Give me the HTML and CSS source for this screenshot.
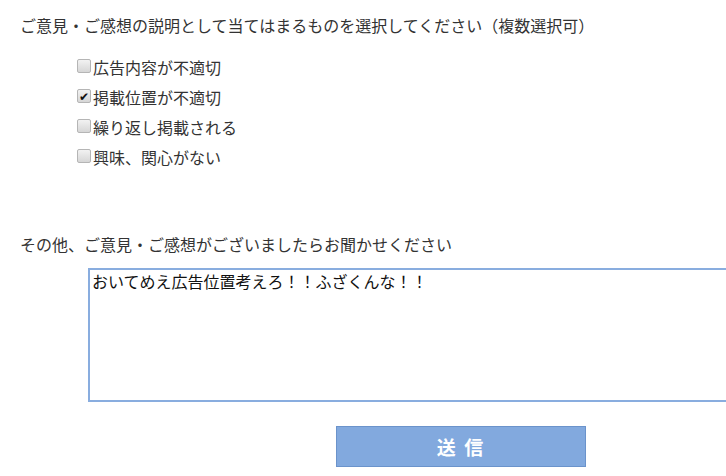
FILE: index.html
```html
<html>

<head>
    <title>ご意見・ご感想</title>
    <meta charset="utf-8">
    <link rel="stylesheet" href="styles.css">
</head>

<body>

    <form class="feedback">
        <p class="question">ご意見・ご感想の説明として当てはまるものを選択してください（複数選択可）</p>

        <ul class="options">
            <li><label><span class="check"></span>広告内容が不適切</label></li>
            <li><label><span class="check checked">&#10004;</span>掲載位置が不適切</label></li>
            <li><label><span class="check"></span>繰り返し掲載される</label></li>
            <li><label><span class="check"></span>興味、関心がない</label></li>
        </ul>

        <p class="question other">その他、ご意見・ご感想がございましたらお聞かせください</p>

        <textarea class="comment">おいてめえ広告位置考えろ！！ふざくんな！！</textarea>

        <div class="actions">
            <button type="button" class="submit">送 信</button>
        </div>
    </form>

</body>

</html>
```
FILE: styles.css
```css
body {
    margin: 0;
    font-family: "Noto Sans CJK JP", "Noto Sans", sans-serif;
    font-size: 16px;
    color: #333;
    background: #fff;
}

.feedback {
    padding: 13px 0 0 20px;
}

.question {
    margin: 0;
    line-height: 24px;
}

.options {
    list-style: none;
    margin: 15px 0 0 57px;
    padding: 0;
}

.options li {
    height: 30px;
    line-height: 30px;
}

.options label {
    display: flex;
    align-items: center;
}

.check {
    width: 12px;
    height: 12px;
    border: 1px solid #b5b5b5;
    border-radius: 2px;
    background: linear-gradient(#f2f2f2, #d6d6d6);
    margin: 0 2px 3px 0;
    font-size: 12px;
    line-height: 12px;
    text-align: center;
    color: #111;
}

.other {
    margin-top: 60px;
}

.comment {
    display: block;
    margin: 12px 0 0 68px;
    width: 660px;
    height: 134px;
    box-sizing: border-box;
    border: 2px solid #89addf;
    padding: 0 2px;
    font-family: "Noto Sans CJK JP", sans-serif;
    font-size: 16px;
    line-height: 22px;
    color: #111;
    resize: none;
    outline: none;
}

.actions {
    padding: 24px 0 10px 316px;
}

.submit {
    width: 250px;
    height: 41px;
    background: #82a9de;
    border: 1px solid #6b93cb;
    color: #fff;
    font-family: "Noto Sans CJK JP", sans-serif;
    font-size: 19px;
    font-weight: bold;
    letter-spacing: 2px;
    cursor: pointer;
}
```
